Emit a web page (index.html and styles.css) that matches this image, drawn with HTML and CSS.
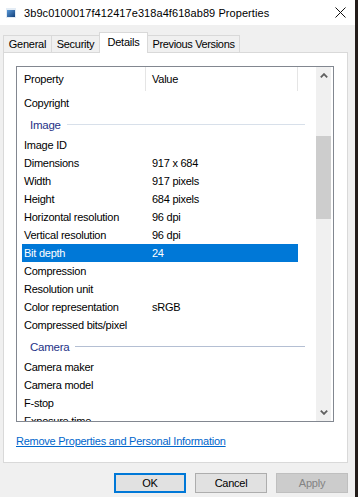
FILE: index.html
```html
<!DOCTYPE html>
<html lang="en">
<head>
    <meta charset="UTF-8">
    <title>Properties</title>
    <link rel="stylesheet" href="styles.css">
</head>
<body>
    <div class="window">
        <div class="titlebar">
            <svg class="title-icon" width="10" height="10" viewBox="0 0 10 10">
                <defs>
                    <linearGradient id="pic" x1="0" y1="0" x2="1" y2="1">
                        <stop offset="0" stop-color="#5b9ad8"/>
                        <stop offset="1" stop-color="#123f7a"/>
                    </linearGradient>
                </defs>
                <rect x="0" y="0" width="10" height="10" fill="#e3ecf5"/>
                <rect x="1" y="2" width="8" height="7" fill="url(#pic)"/>
            </svg>
            <span class="title">3b9c0100017f412417e318a4f618ab89 Properties</span>
            <svg class="close" width="11" height="11" viewBox="0 0 11 11">
                <path d="M0.5 0.5 L10.5 10.5 M10.5 0.5 L0.5 10.5" stroke="#111" stroke-width="1"/>
            </svg>
        </div>

        <div class="tabs">
            <div class="tab tab-general">General</div>
            <div class="tab tab-security">Security</div>
            <div class="tab tab-details active">Details</div>
            <div class="tab tab-previous">Previous Versions</div>
        </div>

        <div class="panel">
            <div class="listview">
                <div class="list-main">
                    <div class="list-header">
                        <div class="col-prop">Property</div>
                        <div class="col-val">Value</div>
                    </div>
                    <div class="list-body">
                        <div class="row"><span class="cell-prop">Copyright</span><span class="cell-val"></span></div>
                        <div class="group"><span>Image</span><div class="group-line"></div></div>
                        <div class="row"><span class="cell-prop">Image ID</span><span class="cell-val"></span></div>
                        <div class="row"><span class="cell-prop">Dimensions</span><span class="cell-val">917 x 684</span></div>
                        <div class="row"><span class="cell-prop">Width</span><span class="cell-val">917 pixels</span></div>
                        <div class="row"><span class="cell-prop">Height</span><span class="cell-val">684 pixels</span></div>
                        <div class="row"><span class="cell-prop">Horizontal resolution</span><span class="cell-val">96 dpi</span></div>
                        <div class="row"><span class="cell-prop">Vertical resolution</span><span class="cell-val">96 dpi</span></div>
                        <div class="row selected"><span class="cell-prop">Bit depth</span><span class="cell-val">24</span></div>
                        <div class="row"><span class="cell-prop">Compression</span><span class="cell-val"></span></div>
                        <div class="row"><span class="cell-prop">Resolution unit</span><span class="cell-val"></span></div>
                        <div class="row"><span class="cell-prop">Color representation</span><span class="cell-val">sRGB</span></div>
                        <div class="row"><span class="cell-prop">Compressed bits/pixel</span><span class="cell-val"></span></div>
                        <div class="group"><span>Camera</span><div class="group-line dark"></div></div>
                        <div class="row"><span class="cell-prop">Camera maker</span><span class="cell-val"></span></div>
                        <div class="row"><span class="cell-prop">Camera model</span><span class="cell-val"></span></div>
                        <div class="row"><span class="cell-prop">F-stop</span><span class="cell-val"></span></div>
                        <div class="row"><span class="cell-prop">Exposure time</span><span class="cell-val"></span></div>
                    </div>
                </div>
                <div class="scrollbar">
                    <div class="arrow">
                        <svg width="8" height="5" viewBox="0 0 8 5"><path d="M0.8 4.3 L4 1.1 L7.2 4.3" fill="none" stroke="#606060" stroke-width="1.8"/></svg>
                    </div>
                    <div class="track"><div class="thumb"></div></div>
                    <div class="arrow">
                        <svg width="8" height="5" viewBox="0 0 8 5"><path d="M0.8 0.7 L4 3.9 L7.2 0.7" fill="none" stroke="#606060" stroke-width="1.8"/></svg>
                    </div>
                </div>
            </div>
            <a href="#" class="remove-link">Remove Properties and Personal Information</a>
        </div>

        <div class="buttons">
            <button class="btn btn-default">OK</button>
            <button class="btn">Cancel</button>
            <button class="btn btn-disabled">Apply</button>
        </div>
    </div>
</body>
</html>
```

FILE: styles.css
```css
body {
    margin: 0;
    background-color: #231d1a;
    font-family: "Segoe UI", "Liberation Sans", Arial, sans-serif;
    font-size: 11px;
    letter-spacing: -0.25px;
    color: #000;
}
.window {
    width: 355px;
    height: 497px;
    background-color: #f0f0f0;
    display: flex;
    flex-direction: column;
}
.titlebar {
    height: 25px;
    background-color: #fff;
    display: flex;
    align-items: center;
    padding-left: 6px;
    box-sizing: border-box;
}
.title-icon {
    margin-right: 8px;
    margin-top: 1px;
}
.title {
    font-size: 11px;
    letter-spacing: 0.07px;
    line-height: 14px;
}
.close {
    margin-left: auto;
    margin-right: 9px;
}
.tabs {
    height: 27px;
    display: flex;
    align-items: flex-end;
    padding-left: 3px;
}
.tab {
    height: 17px;
    box-sizing: border-box;
    border: 1px solid #d9d9d9;
    border-bottom: none;
    margin-right: -1px;
    background-color: #f0f0f0;
    text-align: center;
    line-height: 16px;
}
.tab-general { width: 49px; }
.tab-security { width: 49px; }
.tab-details { width: 49px; }
.tab-previous { width: 93px; letter-spacing: -0.35px; }
.tab.active {
    height: 21px;
    margin-bottom: -1px;
    background-color: #fff;
    position: relative;
    z-index: 1;
    line-height: 19px;
}
.panel {
    height: 411px;
    margin: 0 7px 0 3px;
    box-sizing: border-box;
    border: 1px solid #d9d9d9;
    background-color: #fff;
    padding: 13px 13px 0 12px;
}
.listview {
    height: 356px;
    box-sizing: border-box;
    border: 1px solid #828790;
    display: flex;
}
.list-main {
    flex: 1;
    overflow: hidden;
}
.list-header {
    height: 24px;
    display: flex;
    line-height: 24px;
}
.col-prop {
    width: 129px;
    box-sizing: border-box;
    padding-left: 7px;
    border-right: 1px solid #e5e5e5;
}
.col-val {
    width: 152px;
    box-sizing: border-box;
    padding-left: 6px;
    border-right: 1px solid #e5e5e5;
}
.list-body {
    padding-top: 3px;
}
.row {
    height: 18px;
    width: 276px;
    margin-left: 5px;
    display: flex;
    align-items: center;
    white-space: nowrap;
}
.cell-prop {
    width: 128px;
    padding-left: 2px;
}
.row.selected {
    background-color: #0078d7;
    color: #fff;
}
.group {
    height: 24px;
    display: flex;
    align-items: center;
    padding: 2px 11px 0 13px;
    box-sizing: border-box;
    color: #1e3287;
    font-size: 11.5px;
}
.group-line {
    flex: 1;
    height: 1px;
    margin-left: 6px;
    margin-top: -1px;
    background-color: #d8e0ea;
}
.group-line.dark {
    background-color: #b4bfd3;
}
.scrollbar {
    width: 15px;
    margin-right: 2px;
    background-color: #f0f0f0;
    display: flex;
    flex-direction: column;
}
.arrow {
    height: 17px;
    display: flex;
    align-items: center;
    justify-content: center;
}
.track {
    flex: 1;
    padding-top: 52px;
}
.thumb {
    height: 83px;
    background-color: #cdcdcd;
}
.remove-link {
    display: inline-block;
    margin-top: 12px;
    color: #0066cc;
    text-decoration: underline;
    line-height: 14px;
}
.buttons {
    display: flex;
    justify-content: flex-end;
    gap: 9px;
    padding: 10px 7px 0 0;
}
.btn {
    width: 72px;
    height: 20px;
    box-sizing: border-box;
    background-color: #e1e1e1;
    border: 1px solid #adadad;
    font-family: "Segoe UI", "Liberation Sans", Arial, sans-serif;
    font-size: 11px;
    letter-spacing: -0.25px;
    color: #000;
    padding: 0;
}
.btn-default {
    border: 2px solid #0078d7;
}
.btn-disabled {
    background-color: #cccccc;
    border-color: #bfbfbf;
    color: #838383;
}
```
